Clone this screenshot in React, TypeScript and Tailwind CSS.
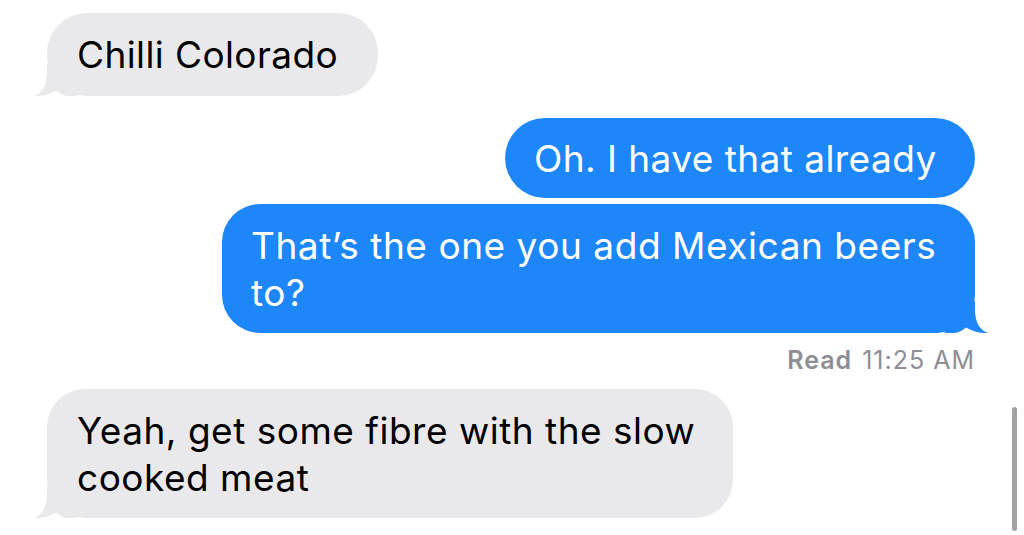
import React from "react";

const FONT = { fontFamily: "Inter, 'Noto Sans', sans-serif" };

function LeftTail({ color }: { color: string }) {
  return (
    <svg
      className="absolute bottom-0 left-[-14px]"
      width="44"
      height="32"
      viewBox="0 0 44 32"
    >
      <path
        d="M14 0 L14 8 C14 22 9 29 1 32 C 9 32.5 17 30 23 26.5 C 27 30 31 32 37 32 L44 32 L44 0 Z"
        fill={color}
      />
    </svg>
  );
}

function RightTail({ color }: { color: string }) {
  return (
    <svg
      className="absolute bottom-0 right-[-14px]"
      width="44"
      height="32"
      viewBox="0 0 44 32"
    >
      <path
        d="M30 0 L30 8 C30 22 35 29 43 32 C 35 32.5 27 30 21 26.5 C 17 30 13 32 7 32 L0 32 L0 0 Z"
        fill={color}
      />
    </svg>
  );
}

export default function App() {
  return (
    <div
      className="relative w-[1024px] h-[535px] overflow-hidden bg-white text-black"
      style={FONT}
    >
      <div className="flex flex-col pt-[13px] pl-[47px] pr-[49px]">
        {/* Received 1 */}
        <div className="relative w-[331px] h-[83px] rounded-[40px] bg-[#e9e9eb] flex items-center pl-[30px]">
          <LeftTail color="#e9e9eb" />
          <span className="relative text-[37px] leading-[47px] tracking-[0.4px]">
            Chilli Colorado
          </span>
        </div>

        {/* Sent 1 */}
        <div className="self-end mt-[22px] relative w-[470px] h-[80px] rounded-[40px] bg-[#1d87f9] flex items-center pl-[29px] text-white">
          <span className="text-[37px] leading-[47px] tracking-[0.45px]">
            Oh. I have that already
          </span>
        </div>

        {/* Sent 2 */}
        <div className="self-end mt-[6px] relative w-[753px] h-[129px] rounded-[38px] bg-[#1d87f9] flex items-center pl-[29px] text-white">
          <RightTail color="#1d87f9" />
          <span className="relative text-[37px] leading-[47px] tracking-[0.55px]">
            That’s the one you add Mexican beers
            <br />
            to?
          </span>
        </div>

        {/* Read receipt */}
        <div className="self-end mt-[15px] h-[24px] flex items-center text-[25px] leading-[24px] tracking-[1px] text-[#8e8e93]">
          <span className="font-semibold">Read</span>
          <span className="ml-[10px]">11:25 AM</span>
        </div>

        {/* Received 2 */}
        <div className="mt-[17px] relative w-[686px] h-[129px] rounded-[38px] bg-[#e9e9eb] flex items-center pl-[30px]">
          <LeftTail color="#e9e9eb" />
          <span className="relative text-[37px] leading-[47px] tracking-[0.5px]">
            Yeah, get some fibre with the slow
            <br />
            cooked meat
          </span>
        </div>
      </div>

      {/* Scroll indicator */}
      <div className="absolute left-[1012px] top-[407px] w-[5px] h-[124px] rounded-full bg-[#a3a3a3]" />
    </div>
  );
}
